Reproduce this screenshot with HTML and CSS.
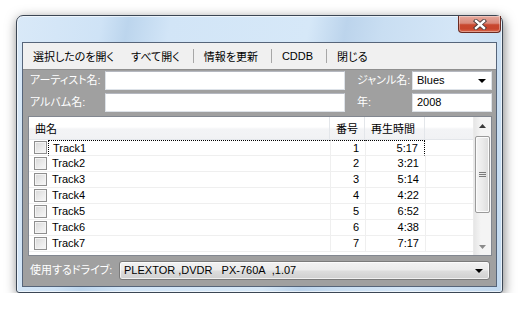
FILE: index.html
```html
<!DOCTYPE html>
<html lang="ja">
<head>
    <meta charset="UTF-8">
    <title>CD情報</title>
    <link rel="stylesheet" href="styles.css">
</head>
<body>
    <div class="window">
        <div class="titlebar">
            <div class="close-btn">
                <svg width="14" height="11" viewBox="0 0 14 11">
                    <path d="M3 2 L11 9 M11 2 L3 9" stroke="#4a3a3a" stroke-width="4.2" stroke-linecap="square"/>
                    <path d="M3 2 L11 9 M11 2 L3 9" stroke="#ffffff" stroke-width="2.4" stroke-linecap="square"/>
                </svg>
            </div>
        </div>
        <div class="client">
            <div class="toolbar">
                <span class="tool first">選択したのを開く</span>
                <span class="tool">すべて開く</span>
                <span class="sep"></span>
                <span class="tool">情報を更新</span>
                <span class="sep"></span>
                <span class="tool">CDDB</span>
                <span class="sep"></span>
                <span class="tool">閉じる</span>
            </div>

            <div class="info">
                <label class="lbl">アーティスト名:</label>
                <div class="field"></div>
                <label class="lbl lbl-right">ジャンル名:</label>
                <div class="field select">Blues<span class="arrow"></span></div>
                <label class="lbl">アルバム名:</label>
                <div class="field"></div>
                <label class="lbl lbl-right">年:</label>
                <div class="field">2008</div>
            </div>

            <div class="list">
                <div class="list-body">
                    <table class="tracks">
                        <colgroup>
                            <col class="c-check">
                            <col class="c-name">
                            <col class="c-num">
                            <col class="c-time">
                            <col>
                        </colgroup>
                        <thead>
                            <tr>
                                <th colspan="2" class="h-name">曲名</th>
                                <th class="h-num">番号</th>
                                <th class="h-time">再生時間</th>
                                <th class="h-fill"></th>
                            </tr>
                        </thead>
                        <tbody>
                            <tr class="focus">
                                <td class="check"><span class="box"></span></td>
                                <td class="name">Track1</td>
                                <td class="num">1</td>
                                <td class="time">5:17</td>
                                <td class="fill"></td>
                            </tr>
                            <tr>
                                <td class="check"><span class="box"></span></td>
                                <td class="name">Track2</td>
                                <td class="num">2</td>
                                <td class="time">3:21</td>
                                <td class="fill"></td>
                            </tr>
                            <tr>
                                <td class="check"><span class="box"></span></td>
                                <td class="name">Track3</td>
                                <td class="num">3</td>
                                <td class="time">5:14</td>
                                <td class="fill"></td>
                            </tr>
                            <tr>
                                <td class="check"><span class="box"></span></td>
                                <td class="name">Track4</td>
                                <td class="num">4</td>
                                <td class="time">4:22</td>
                                <td class="fill"></td>
                            </tr>
                            <tr>
                                <td class="check"><span class="box"></span></td>
                                <td class="name">Track5</td>
                                <td class="num">5</td>
                                <td class="time">6:52</td>
                                <td class="fill"></td>
                            </tr>
                            <tr>
                                <td class="check"><span class="box"></span></td>
                                <td class="name">Track6</td>
                                <td class="num">6</td>
                                <td class="time">4:38</td>
                                <td class="fill"></td>
                            </tr>
                            <tr>
                                <td class="check"><span class="box"></span></td>
                                <td class="name">Track7</td>
                                <td class="num">7</td>
                                <td class="time">7:17</td>
                                <td class="fill"></td>
                            </tr>
                        </tbody>
                    </table>
                </div>
                <div class="scrollbar">
                    <div class="sb-btn">
                        <svg width="7" height="4" viewBox="0 0 7 4"><path d="M0 4 L3.5 0 L7 4 Z" fill="#3a3a3a"/></svg>
                    </div>
                    <div class="sb-track">
                        <div class="sb-thumb"><span class="grip"></span></div>
                    </div>
                    <div class="sb-btn">
                        <svg width="7" height="4" viewBox="0 0 7 4"><path d="M0 0 L7 0 L3.5 4 Z" fill="#8a8a8a"/></svg>
                    </div>
                </div>
            </div>

            <div class="drive">
                <label class="lbl">使用するドライブ:</label>
                <div class="combo">PLEXTOR ,DVDR&nbsp;&nbsp;&nbsp;PX-760A&nbsp;&nbsp;,1.07<span class="arrow"></span></div>
            </div>
        </div>
    </div>
</body>
</html>
```

FILE: styles.css
```css
body {
    margin: 0;
    padding: 0;
    background-color: #ffffff;
    font-family: 'Liberation Sans', 'Noto Sans CJK JP', sans-serif;
    font-size: 11px;
    font-feature-settings: "palt";
    color: #000000;
}

.window {
    box-sizing: border-box;
    width: 487px;
    height: 278px;
    margin: 15px 0 0 16px;
    padding: 0 5px 5px 5px;
    border: 1px solid #3b4654;
    border-radius: 7px 7px 3px 3px;
    background: linear-gradient(100deg, #d9e9f8 0%, #cfe3f6 16%, #bcd5ed 21%, #d2e5f7 29%, #d6e8f8 55%, #bcd4ec 62%, #c9def2 69%, #d4e6f7 82%, #c2d9ef 100%);
    box-shadow: 1px 3px 12px rgba(0, 0, 0, 0.5), inset 0 0 0 1px rgba(255, 255, 255, 0.6);
}

.titlebar {
    height: 26px;
    display: flex;
    justify-content: flex-end;
    align-items: flex-start;
}

.close-btn {
    width: 43px;
    height: 17px;
    margin-right: -4px;
    box-sizing: border-box;
    border: 1px solid #6b2b22;
    border-top: none;
    border-radius: 0 0 4px 4px;
    background: linear-gradient(to bottom, #e6a89c 0%, #d98a7b 45%, #c8482f 55%, #c8452c 80%, #d96a4e 100%);
    box-shadow: inset 0 0 0 1px rgba(255, 255, 255, 0.35);
    display: flex;
    justify-content: center;
    align-items: center;
}

.client {
    box-sizing: border-box;
    height: 245px;
    border: 1px solid #56657a;
    background-color: #a0a0a0;
    display: flex;
    flex-direction: column;
}

/* toolbar */
.toolbar {
    height: 26px;
    border-bottom: 1px solid #8e8e8e;
    background-color: #f0f0f0;
    display: flex;
    align-items: center;
}

.tool {
    padding: 0 13px 0 10px;
    white-space: nowrap;
}

.tool.first {
    padding-right: 7px;
}

.sep {
    width: 1px;
    height: 14px;
    background-color: #a7a7a7;
}

/* artist / album fields */
.info {
    padding: 1px 0 0 5px;
    display: grid;
    grid-template-columns: 77px 240px 67px 80px;
    grid-auto-rows: 19px;
    row-gap: 3px;
}

.lbl {
    color: #ffffff;
    padding-left: 2px;
    line-height: 19px;
    white-space: nowrap;
}

.lbl-right {
    padding-left: 12px;
}

.field {
    box-sizing: border-box;
    background-color: #ffffff;
    border: 1px solid #dde2e8;
    border-top-color: #b5b8c0;
    padding: 0 4px;
    line-height: 17px;
    position: relative;
}

.arrow {
    position: absolute;
    right: 5px;
    top: 7px;
    width: 0;
    height: 0;
    border-left: 4px solid transparent;
    border-right: 4px solid transparent;
    border-top: 4px solid #000000;
}

/* track list */
.list {
    box-sizing: border-box;
    width: 464px;
    height: 140px;
    margin: 4px 0 0 5px;
    border: 1px solid #828790;
    background-color: #ffffff;
    display: flex;
}

.list-body {
    flex: 1;
    overflow: hidden;
}

.tracks {
    width: 100%;
    table-layout: fixed;
    border-collapse: separate;
    border-spacing: 0;
}

.c-check { width: 19px; }
.c-name { width: 282px; }
.c-num { width: 35px; }
.c-time { width: 60px; }

.tracks th {
    box-sizing: border-box;
    height: 23px;
    font-weight: normal;
    background: linear-gradient(to bottom, #ffffff 0%, #ffffff 45%, #f3f4f6 55%, #f1f2f4 100%);
    border-bottom: 1px solid #e3e6ea;
    border-right: 1px solid #e3e6ea;
    padding: 0 6px;
    font-size: 11px;
    white-space: nowrap;
}

.h-name { text-align: left; }
.h-num { text-align: right; padding-right: 7px !important; }
.h-time { text-align: left; }
.h-fill { border-right: none !important; }

.tracks td {
    box-sizing: border-box;
    height: 16px;
    padding: 0;
    border-bottom: 1px solid #efefef;
    line-height: 15px;
    white-space: nowrap;
    font-size: 11px;
}

.check {
    padding-left: 5px !important;
}

.box {
    display: block;
    width: 13px;
    height: 13px;
    box-sizing: border-box;
    border: 1px solid #8f8f8f;
    background: linear-gradient(135deg, #d8d8d8 0%, #ececec 60%, #f8f8f8 100%);
    box-shadow: inset 0 0 0 1px #f4f4f4;
}

.name {
    padding-left: 4px !important;
}

.num {
    text-align: right;
    padding-right: 6px !important;
    border-left: 1px solid #efefef;
}

.time {
    text-align: right;
    padding-right: 6px !important;
    border-left: 1px solid #efefef;
}

.fill {
    border-left: 1px solid #efefef;
}

.focus .name,
.focus .num,
.focus .time {
    border-top: 1px dotted #000000;
    line-height: 14px;
}

.focus .name { border-left: 1px dotted #000000; }
.focus .time { border-right: 1px dotted #000000; }
.focus .fill { border-left: none; }

/* scrollbar */
.scrollbar {
    width: 17px;
    display: flex;
    flex-direction: column;
    background: linear-gradient(to right, #e6e6e6 0%, #f4f4f4 40%, #f4f4f4 100%);
    border-left: 1px solid #eaeaea;
}

.sb-btn {
    height: 17px;
    display: flex;
    justify-content: center;
    align-items: center;
}

.sb-track {
    flex: 1;
    padding-top: 2px;
}

.sb-thumb {
    box-sizing: border-box;
    height: 77px;
    margin: 0 1px;
    border: 1px solid #9a9a9a;
    border-radius: 2px;
    background: linear-gradient(to right, #f4f4f4 0%, #eaeaea 50%, #dcdcdc 100%);
    box-shadow: inset 0 0 0 1px #fbfbfb;
    display: flex;
    justify-content: center;
    align-items: center;
}

.grip {
    width: 7px;
    height: 5px;
    background: repeating-linear-gradient(to bottom, #7a7a7a 0px, #7a7a7a 1px, transparent 1px, transparent 2px);
}

/* drive */
.drive {
    margin: 5px 0 0 5px;
    display: flex;
    align-items: center;
}

.drive .lbl {
    width: 89px;
}

.combo {
    box-sizing: border-box;
    width: 371px;
    height: 19px;
    border: 1px solid #7a7a7a;
    border-radius: 3px;
    background: linear-gradient(to bottom, #f2f2f2 0%, #ebebeb 48%, #dddddd 52%, #cfcfcf 100%);
    box-shadow: inset 0 0 0 1px rgba(255, 255, 255, 0.7);
    padding: 0 4px;
    line-height: 17px;
    white-space: nowrap;
    position: relative;
    font-size: 11px;
}

.combo .arrow {
    right: 6px;
}
```
